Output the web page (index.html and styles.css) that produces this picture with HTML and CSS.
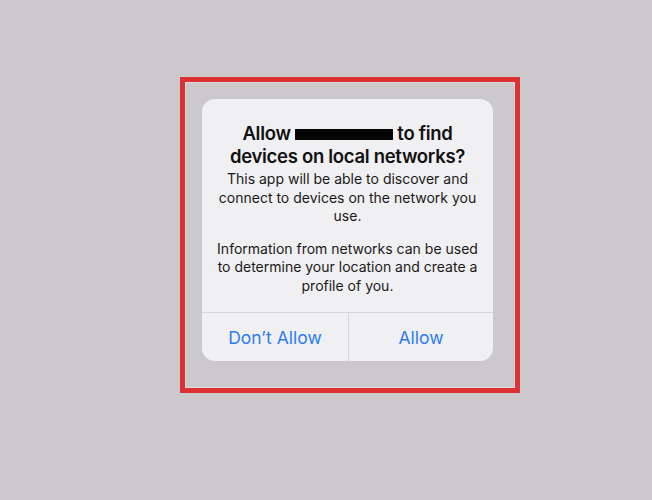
FILE: index.html
```html
<!DOCTYPE html>
<html>
<head>
<meta charset="utf-8">
<link rel="stylesheet" href="styles.css">
</head>
<body>
<div class="frame">
  <div class="dialog">
    <div class="content">
      <h1 class="title">Allow <span class="redact"></span> to find<br>devices on local networks?</h1>
      <p class="msg">This app will be able to discover and connect to devices on the network you use.</p>
      <p class="msg">Information from networks can be used to determine your location and create a profile of you.</p>
    </div>
    <div class="actions">
      <button class="btn">Don’t Allow</button>
      <button class="btn">Allow</button>
    </div>
  </div>
</div>
</body>
</html>
```
FILE: styles.css
```css
html, body {
  margin: 0;
  padding: 0;
}
body {
  background: #cbc9cc;
  width: 652px;
  height: 500px;
  font-family: Inter, "Liberation Sans", sans-serif;
  color: #111;
}
.frame {
  box-sizing: border-box;
  margin: 77px 0 0 180px;
  width: 340px;
  height: 316px;
  border: 5px solid #dc3234;
  padding: 17px 0 0 17px;
  box-shadow: inset 0 0 0 1px #dcdadc;
}
.dialog {
  width: 291px;
  height: 262px;
  background: #f0eff2;
  border-radius: 13px;
  display: flex;
  flex-direction: column;
  overflow: hidden;
}
.content {
  height: 214px;
  box-sizing: border-box;
  border-bottom: 1px solid #d6d5d8;
  padding: 23px 12px 0;
  text-align: center;
}
.title {
  margin: 0 0 3px;
  font-size: 18.5px;
  font-weight: 600;
  line-height: 22.5px;
  letter-spacing: -0.3px;
}
.redact {
  display: inline-block;
  width: 98px;
  height: 11px;
  background: #050505;
  vertical-align: middle;
  line-height: 0;
}
.msg {
  margin: 0 0 14px;
  font-size: 14px;
  line-height: 18.5px;
  color: #1a1a1a;
}
.actions {
  flex: 1;
  display: grid;
  grid-template-columns: 146px 1fr;
}
.btn {
  border: 0;
  background: transparent;
  font-family: inherit;
  font-size: 17.5px;
  color: #2f7cf0;
  padding: 1px 0 0;
}
.btn + .btn {
  border-left: 1px solid #d6d5d8;
}
```
